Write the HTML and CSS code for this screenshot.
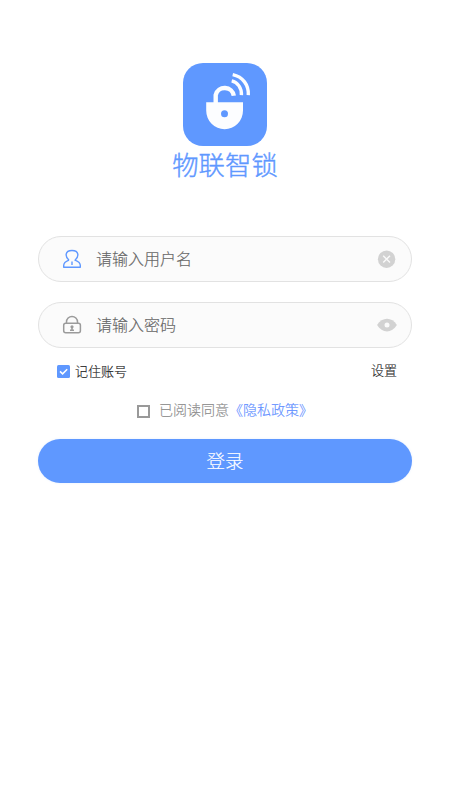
FILE: index.html
```html
<!DOCTYPE html>
<html lang="zh-CN">
<head>
<meta charset="UTF-8">
<title>物联智锁</title>
<link rel="stylesheet" href="styles.css">
</head>
<body>
<main class="login">
  <header class="brand">
    <svg class="logo" viewBox="0 0 84 84" fill="none">
      <rect width="84" height="83" rx="20" fill="#5f98ff"/>
      <path d="M32.7 40V32a9.2 8.9 0 0 1 18.1 0.8" stroke="#fcfdff" stroke-width="4.4"/>
      <path d="M23.2 39.2H60V47.5a18.4 18.8 0 0 1-36.8 0Z" fill="#fcfdff"/>
      <circle cx="41.5" cy="50.8" r="3.5" fill="#5f98ff"/>
      <path d="M48.7 17.9C54.8 19.3 58.8 25 58.4 32.2M49.7 11.6C59.8 13.7 65.9 22 65.3 32.2" stroke="#fcfdff" stroke-width="3.4"/>
    </svg>
    <h1 class="title">物联智锁</h1>
  </header>
  <form class="form">
    <label class="field">
      <svg class="field-icon user" viewBox="0 0 20 20" fill="none" stroke="currentColor" stroke-width="1.4" stroke-linejoin="round">
        <path d="M7 11.2C5 9.7 3.9 7.5 4.2 5.2C4.6 2.5 6.5 1.5 10 1.5S15.4 2.5 15.8 5.2C16.1 7.5 15 9.7 13 11.2C16.6 12.5 18.3 13.9 18.3 16.5V18.2H1.7V16.5C1.7 13.9 3.4 12.5 7 11.2"/>
        <path d="M10 12.4V16"/>
      </svg>
      <input class="input" type="text" placeholder="请输入用户名">
      <svg class="action" viewBox="0 0 20 20" fill="none">
        <circle cx="9.6" cy="10.2" r="8.7" fill="#d2d2d2"/>
        <path d="M6.2 6.8l6.8 6.8M13 6.8l-6.8 6.8" stroke="#fafafa" stroke-width="1.4"/>
      </svg>
    </label>
    <label class="field">
      <svg class="field-icon" viewBox="0 0 20 20" fill="none" stroke="currentColor" stroke-width="1.5">
        <rect x="1.7" y="8.3" width="16.7" height="9.5" rx="2"/>
        <path d="M4.5 8.3V6.9a5.5 5.5 0 0 1 11 0v1.4"/>
        <circle cx="10" cy="11.8" r="1.6" fill="currentColor" stroke="none"/>
        <path d="M10 12.2v3.4M8 15.3h4"/>
      </svg>
      <input class="input" type="password" placeholder="请输入密码">
      <svg class="action" viewBox="0 0 20 20">
        <path d="M.1 10C5 1.5 15 1.5 19.9 10C15 18.5 5 18.5 .1 10Z" fill="#d2d2d2"/>
        <circle cx="10" cy="10" r="2.5" fill="#fafafa"/>
      </svg>
    </label>
    <div class="options">
      <span class="remember">
        <svg class="check" viewBox="0 0 13 13" fill="none">
          <rect width="13" height="13" rx="1.5" fill="#5f98ff"/>
          <path d="M3 6.4l2.6 2.5L10.2 4.3" stroke="#fff" stroke-width="1.5"/>
        </svg>
        记住账号
      </span>
      <span class="settings">设置</span>
    </div>
    <div class="agreement">
      <span class="box"></span>
      <span class="terms">已阅读同意<a class="policy">《隐私政策》</a></span>
    </div>
    <button class="submit" type="button">登录</button>
  </form>
</main>
</body>
</html>
```
FILE: styles.css
```css
* {
  box-sizing: border-box;
}

body {
  margin: 0;
  background: #fff;
  font-family: "Noto Sans CJK SC", sans-serif;
  font-weight: 300;
  -webkit-text-stroke: 0.15px currentColor;
}

.login {
  height: 800px;
  padding: 63px 38px 0;
}

.brand {
  display: flex;
  flex-direction: column;
  align-items: center;
  height: 173px;
}

.logo {
  width: 84px;
  height: 84px;
}

.title {
  margin: 0;
  color: #5f98ff;
  font-size: 26.4px;
  line-height: 34px;
  font-weight: 300;
  -webkit-text-stroke: 0.4px currentColor;
}

.field {
  display: flex;
  align-items: center;
  height: 46px;
  margin-bottom: 20px;
  padding: 0 14px 0 23px;
  border: 1px solid #e2e2e2;
  border-radius: 23px;
  background: #fbfbfb;
}

.field-icon {
  width: 20px;
  height: 20px;
  color: #9b9b9b;
}

.field-icon.user {
  color: #5f98ff;
}

.input {
  flex: 1;
  min-width: 0;
  height: 24px;
  margin: 0 0 2px 14px;
  padding: 0;
  border: 0;
  outline: 0;
  background: transparent;
  font: inherit;
  font-size: 16px;
}

.input::placeholder {
  color: #666;
}

.action {
  width: 20px;
  height: 20px;
}

.options {
  display: flex;
  justify-content: space-between;
  height: 20px;
  margin-top: -7px;
  padding: 0 15px 0 19px;
  color: #222;
  font-size: 13px;
  line-height: 20px;
}

.remember {
  display: flex;
  align-items: center;
  gap: 5px;
}

.settings {
  margin-top: -1px;
}

.check {
  width: 13px;
  height: 13px;
}

.agreement {
  display: flex;
  align-items: center;
  gap: 9px;
  height: 20px;
  margin: 19px 0 19px 99px;
  color: #8b8b8b;
  font-size: 14px;
  line-height: 20px;
}

.box {
  width: 13px;
  height: 13px;
  margin-top: 2px;
  border: 2px solid #999;
}

.terms {
  margin-top: -2px;
}

.policy {
  color: #5f8fff;
}

.submit {
  display: block;
  width: 100%;
  height: 44px;
  padding: 0 0 2px;
  border: 0;
  border-radius: 22px;
  background: #5f98ff;
  box-shadow: 0 0 3px #e8f0ff;
  color: #fff;
  font: inherit;
  font-size: 18.5px;
}
```
